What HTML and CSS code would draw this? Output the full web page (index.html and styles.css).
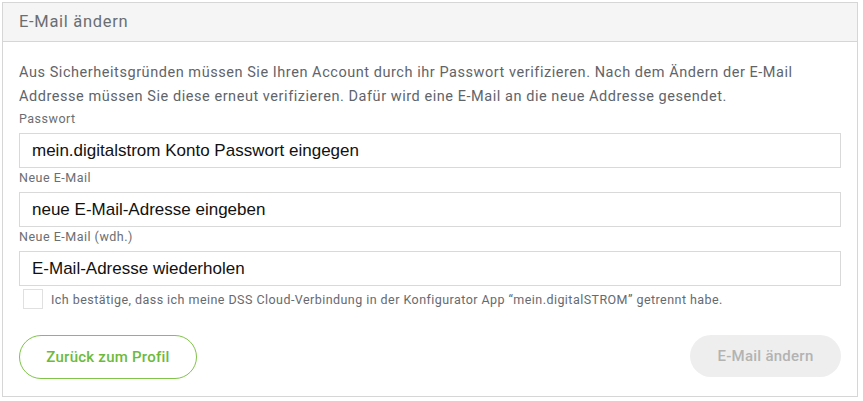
FILE: index.html
```html
<!DOCTYPE html>
<html lang="de">
<head>
<meta charset="utf-8">
<title>E-Mail ändern</title>
<link rel="stylesheet" href="styles.css">
</head>
<body>
<section class="card">
  <header class="card-header">E-Mail ändern</header>
  <div class="card-body">
    <p class="intro">Aus Sicherheitsgründen müssen Sie Ihren Account durch ihr Passwort verifizieren. Nach dem Ändern der E-Mail Addresse müssen Sie diese erneut verifizieren. Dafür wird eine E-Mail an die neue Addresse gesendet.</p>
    <label class="field-label" for="pw">Passwort</label>
    <input class="field" id="pw" type="password" placeholder="mein.digitalstrom Konto Passwort eingegen">
    <label class="field-label" for="mail">Neue E-Mail</label>
    <input class="field" id="mail" type="email" placeholder="neue E-Mail-Adresse eingeben">
    <label class="field-label" for="mail2">Neue E-Mail (wdh.)</label>
    <input class="field" id="mail2" type="email" placeholder="E-Mail-Adresse wiederholen">
    <label class="confirm">
      <span class="checkbox"></span>
      <span class="confirm-text">Ich bestätige, dass ich meine DSS Cloud-Verbindung in der Konfigurator App “mein.digitalSTROM” getrennt habe.</span>
    </label>
    <div class="actions">
      <button class="btn btn-outline" type="button">Zurück zum Profil</button>
      <button class="btn btn-disabled" type="button" disabled>E-Mail ändern</button>
    </div>
  </div>
</section>
</body>
</html>
```
FILE: styles.css
```css
* { box-sizing: border-box; }

html, body {
  margin: 0;
  padding: 0;
  background: #ffffff;
}

body {
  font-family: "Roboto", "Liberation Sans", sans-serif;
  color: #5f646a;
}

.card {
  margin: 2px 5px 2px 2px;
  border: 1px solid #d6d6d6;
  background: #ffffff;
}

.card-header {
  height: 39px;
  line-height: 38px;
  padding: 0 16px;
  background: #f5f5f5;
  border-bottom: 1px solid #d6d6d6;
  font-size: 16.5px;
  letter-spacing: 0.7px;
  color: #6a6e72;
}

.card-body {
  padding: 19px 16px 17px;
  display: flex;
  flex-direction: column;
}

.intro {
  margin: 0;
  font-size: 14.5px;
  letter-spacing: 0.55px;
  line-height: 24px;
  color: #5f646a;
}

.field-label {
  display: block;
  font-size: 12.5px;
  letter-spacing: 0.5px;
  line-height: 20px;
  padding-bottom: 4px;
  color: #6a6e72;
}

.field {
  display: block;
  width: 100%;
  height: 35px;
  margin: 0;
  padding: 0 12px;
  border: 1px solid #d9d9d9;
  border-radius: 0;
  background: #ffffff;
  font-family: "Liberation Sans", Arial, sans-serif;
  font-size: 17px;
  color: #000000;
  outline: none;
}

.field::placeholder {
  color: #111111;
  opacity: 1;
}

.confirm {
  display: flex;
  align-items: center;
  gap: 8px;
  margin-top: 3px;
  padding-left: 4px;
}

.checkbox {
  flex: none;
  width: 20px;
  height: 20px;
  border: 1px solid #e0e0e0;
  background: #ffffff;
}

.confirm-text {
  font-size: 12.5px;
  letter-spacing: 0.45px;
  color: #666a6f;
}

.actions {
  display: flex;
  justify-content: space-between;
  align-items: flex-start;
  margin-top: 26px;
}

.btn {
  font-family: "Roboto", "Liberation Sans", sans-serif;
  font-size: 15px;
  font-weight: 500;
  letter-spacing: 0.25px;
  border-radius: 22px;
  cursor: pointer;
}

.btn-outline {
  height: 44px;
  width: 178px;
  border: 1px solid #80c44a;
  background: #ffffff;
  color: #6cba3c;
}

.btn-disabled {
  height: 42px;
  width: 151px;
  border: none;
  background: #eeeeee;
  color: #b3b3b3;
  cursor: default;
}
```
